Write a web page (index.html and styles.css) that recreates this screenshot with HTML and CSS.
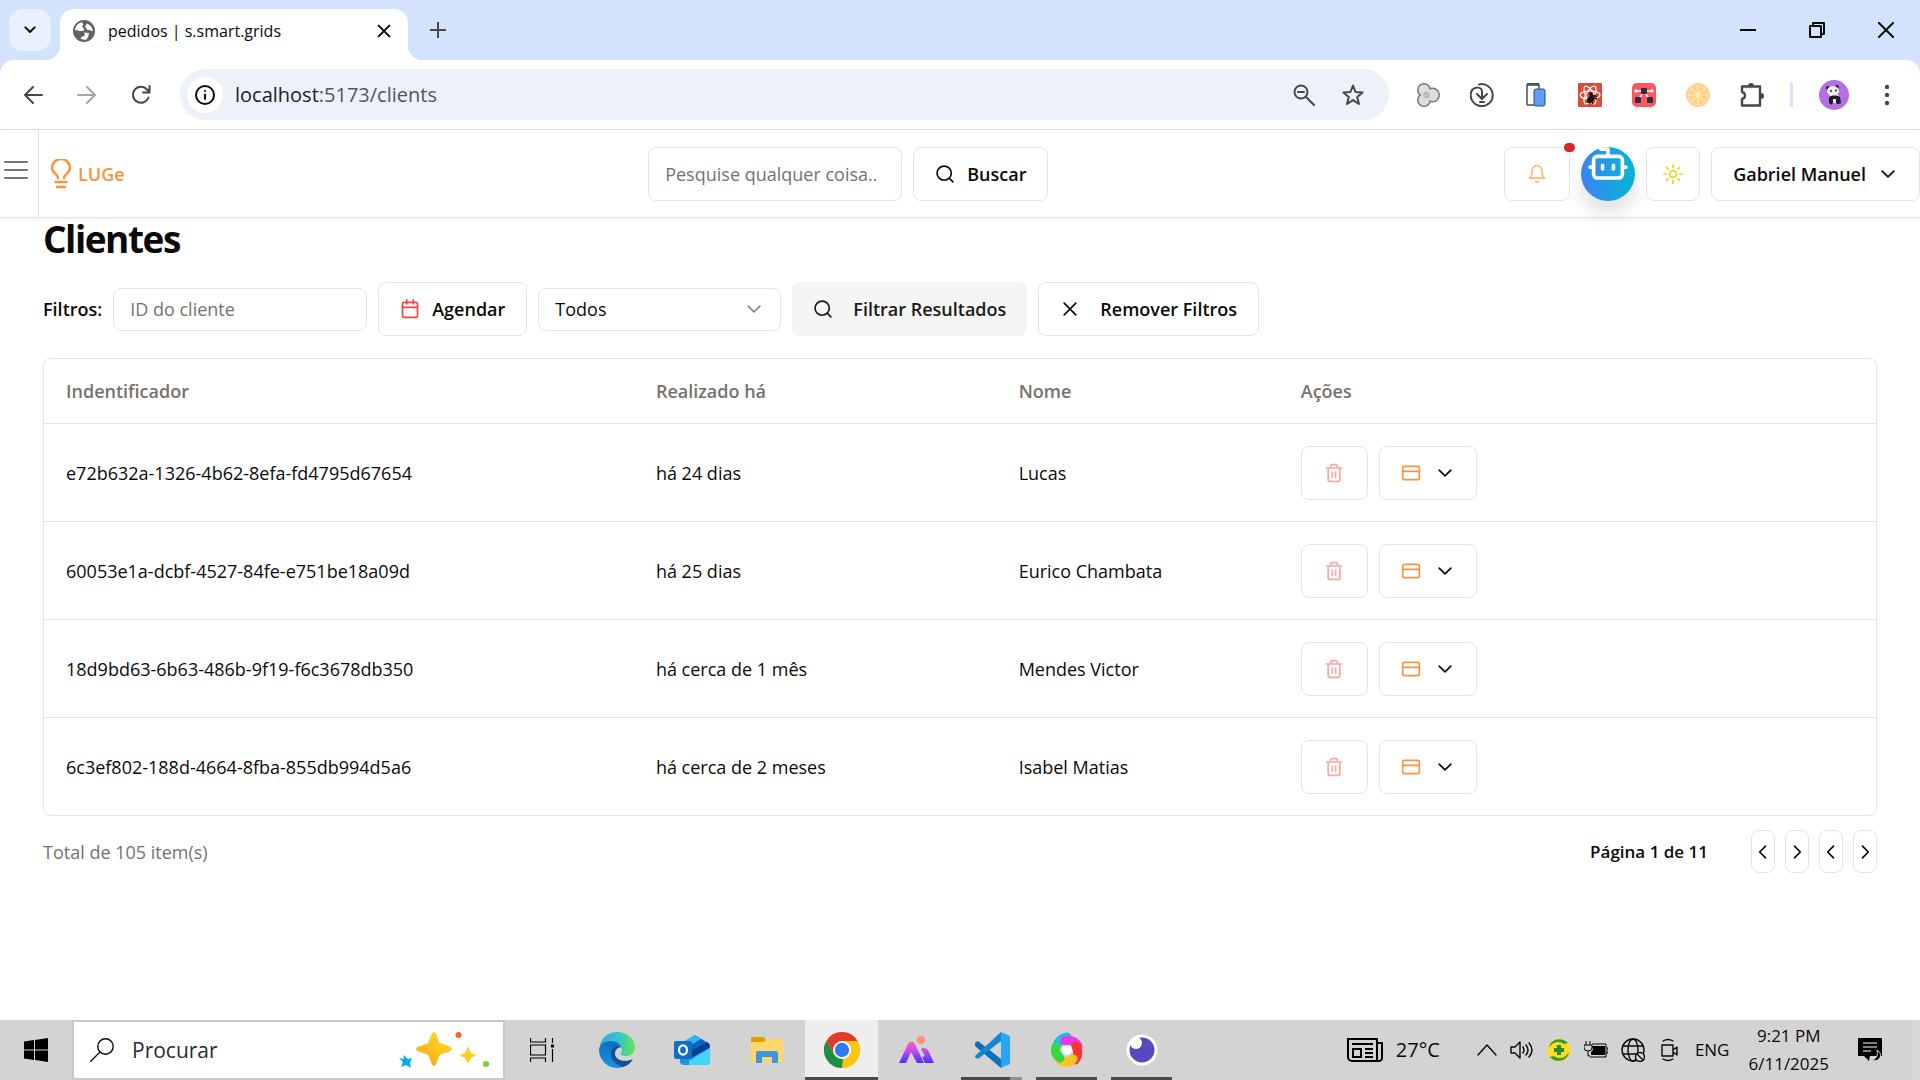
FILE: index.html
```
<!DOCTYPE html>
<html lang="pt">
<head>
<meta charset="utf-8">
<meta name="viewport" content="width=device-width, initial-scale=1">
<title>pedidos | s.smart.grids</title>
<link rel="stylesheet" href="styles.css">
</head>
<body>
<svg class="sprite" aria-hidden="true">
  <symbol id="search" viewBox="0 0 24 24"><circle cx="11" cy="11" r="8.5"/><path d="m21.5 21.5-4.5-4.5"/></symbol>
  <symbol id="down" viewBox="0 0 24 24"><path d="m5 8.500 7 7 7-7"/></symbol>
  <symbol id="left" viewBox="0 0 24 24"><path d="m15 5-7 7 7 7"/></symbol>
  <symbol id="right" viewBox="0 0 24 24"><path d="m9 5 7 7-7 7"/></symbol>
  <symbol id="trash" viewBox="0 0 24 24"><path d="M3 6h18M19 6v14a2 2 0 0 1-2 2H7a2 2 0 0 1-2-2V6M8 6V4a2 2 0 0 1 2-2h4a2 2 0 0 1 2 2v2M10 11v6M14 11v6"/></symbol>
  <symbol id="card" viewBox="0 0 24 24"><rect x="2" y="4" width="20" height="16" rx="2"/><path d="M2 10h20"/></symbol>
</svg>

<header class="browser">
  <div class="tabstrip">
    <button class="tab-search" aria-label="Pesquisar guias"><svg class="icon i16 bold" viewBox="0 0 24 24"><path d="m5 8 7 7 7-7"/></svg></button>
    <div class="tab">
      <svg class="i22" viewBox="0 0 22 22"><circle cx="11" cy="11" r="11" fill="#5f6368"/><path fill="#fff" d="M2 10.500C2 6 5 3 9 2.200c1 .3.500 1.600 1.400 2.200L9 6.200l1 1.600c1.200.9 1.800 2 .5 2.900L8 11H5.500L4 10zM14 3.500c2.800 1.200 5.500 3.800 5.700 7.200-1.200.8-1.800 0-2.700-.7h-2.500l-1.500-2-1-1.500 1-1.500zM11 12.500l5 .5-.5 3-1.800 3.300c-1.800 1-5 .4-6.200-.7L9 16.500c2 .5 2-1 3-1.500z"/></svg>
      <span class="tab-title">pedidos | s.smart.grids</span>
      <button class="plain" aria-label="Fechar guia"><svg class="icon i16 bold" viewBox="0 0 24 24"><path d="M4 4l16 16M20 4 4 20"/></svg></button>
    </div>
    <button class="plain new-tab" aria-label="Nova guia"><svg class="icon i16" viewBox="0 0 16 16"><path d="M8 0v16M0 8h16"/></svg></button>
    <div class="window-controls">
      <button class="plain" aria-label="Minimizar"><svg class="icon i16" viewBox="0 0 16 16"><path d="M0 8h16"/></svg></button>
      <button class="plain" aria-label="Restaurar"><svg class="icon i16" viewBox="0 0 16 16"><path d="M1 4h11v11H1zM4 4V1h11v11h-3"/></svg></button>
      <button class="plain" aria-label="Fechar"><svg class="icon i16" viewBox="0 0 16 16"><path d="m0 0 16 16M16 0 0 16"/></svg></button>
    </div>
  </div>
  <div class="toolbar">
    <nav class="history">
      <button class="plain" aria-label="Voltar"><svg class="icon i20 grey" viewBox="0 0 20 20"><path d="M19 10H2M10 2l-8 8 8 8"/></svg></button>
      <button class="plain" aria-label="Avançar"><svg class="icon i20 light" viewBox="0 0 20 20"><path d="M1 10h17M10 2l8 8-8 8"/></svg></button>
      <button class="plain" aria-label="Recarregar"><svg class="icon i20 grey" viewBox="0 0 20 20"><path d="M17.500 12.500A8 8 0 1 1 16 4.500l2 2M18.500 1v6.500H12"/></svg></button>
    </nav>
    <div class="omnibox">
      <span class="info"><svg class="icon i20" viewBox="0 0 20 20"><circle cx="10" cy="10" r="9"/><path d="M10 9.500v4.500M10 6h.01"/></svg></span>
      <a class="url" href="#clients"><b>localhost</b>:5173/clients</a>
      <button class="plain" aria-label="Zoom"><svg class="icon i22 grey" viewBox="0 0 22 22"><circle cx="8" cy="8" r="6.500"/><path d="m13 13 8 8M5 8h6"/></svg></button>
      <button class="plain" aria-label="Favoritar"><svg class="icon i24 grey" viewBox="0 0 24 24"><path d="m12 2.500 2.600 6.500 7 .5-5.400 4.500 1.800 7-6-3.900L6 21l1.800-7-5.400-4.500 7-.5z"/></svg></button>
    </div>
    <div class="extensions">
      <button class="plain" aria-label="Extensão de cores"><svg class="i24" viewBox="0 0 24 24"><g fill="#d9d9d9" stroke="#777" stroke-width="2"><circle cx="8" cy="7" r="6"/><circle cx="8" cy="17" r="6"/><circle cx="16.500" cy="12" r="6.500"/></g><g fill="#dedede"><circle cx="8" cy="7" r="5.500"/><circle cx="8" cy="17" r="5.500"/><circle cx="16.500" cy="12" r="6"/></g><circle cx="10.500" cy="12" r="3.500" fill="#bdbdbd"/></svg></button>
      <button class="plain" aria-label="Downloads"><svg class="icon i24 grey" viewBox="0 0 24 24"><path d="M9 1.500A11 11 0 1 1 2 7c3-3 10-4 10 2v6M7 11l5 5 5-5M10 19h4"/></svg></button>
      <button class="plain" aria-label="Dispositivos"><svg class="i24" viewBox="0 0 24 24"><path d="M3 22V2h12v4M3 22h7" fill="none" stroke="#42506b" stroke-width="1.500"/><path d="M3 1h12" stroke="#42506b" stroke-width="2"/><rect x="10" y="6" width="11" height="17" rx="2" fill="#5c9dff" stroke="#34486c"/></svg></button>
      <button class="plain" aria-label="React"><svg class="i24" viewBox="0 0 24 24"><rect width="24" height="24" rx="1" fill="#dc4b3c"/><g fill="none" stroke="#fff" stroke-width="1.200"><ellipse cx="12" cy="12" rx="10" ry="4"/><ellipse cx="12" cy="12" rx="10" ry="4" transform="rotate(60 12 12)"/><ellipse cx="12" cy="12" rx="10" ry="4" transform="rotate(120 12 12)"/></g><ellipse cx="13" cy="16" rx="3" ry="5" transform="rotate(40 13 16)" fill="#211"/><circle cx="13" cy="11" r="2" fill="#211"/><path d="m9 16 4 1 2 4m-1-7 5 2m-3-4 3 2" stroke="#211" stroke-width="1.500" fill="none"/></svg></button>
      <button class="plain" aria-label="Redux"><svg class="i24" viewBox="0 0 24 24"><rect width="24" height="24" rx="5" fill="#ff555d"/><path d="M3 8h18M10 11l-3 5M14 11l3 5" stroke="#fff" stroke-width="1.500"/><circle cx="4" cy="8" r="1.800" fill="#fff"/><circle cx="20" cy="8" r="1.800" fill="#fff"/><rect x="9" y="5" width="6" height="6" rx="1" fill="#2b2f45"/><rect x="3" y="14" width="6" height="6" rx="1" fill="#2b2f45"/><rect x="15" y="14" width="6" height="6" rx="1" fill="#2b2f45"/></svg></button>
      <button class="plain" aria-label="Laranja"><svg class="i24" viewBox="0 0 24 24"><circle cx="12" cy="12" r="11.500" fill="#ffd184" stroke="#ffc7a0"/><path d="M12 2v20M2 12h20M5 5l14 14M19 5 5 19" stroke="#ffe9bd" stroke-width="1.200"/><circle cx="12" cy="12" r="10" fill="none" stroke="#ffe9bd" stroke-width=".8"/></svg></button>
      <button class="plain" aria-label="Extensões"><svg class="i24" viewBox="0 0 24 24"><path d="M2 3.500h18v19H2v-6.500c4-1 4-6 0-7z" fill="none" stroke="#474747" stroke-width="2.400" stroke-linejoin="round"/><path d="M8 3a3 3 0 0 1 6 0zM21 10a3 3 0 0 1 0 6z" fill="#474747"/></svg></button>
      <span class="divider"></span>
      <button class="plain" aria-label="Perfil"><svg class="i30" viewBox="0 0 30 30"><circle cx="15" cy="15" r="15" fill="#b66de8"/><circle cx="9" cy="8" r="2" fill="#222"/><circle cx="18" cy="7" r="2" fill="#222"/><ellipse cx="15" cy="18" rx="5" ry="5" fill="#eee"/><ellipse cx="14" cy="11" rx="6" ry="5" fill="#eee"/><circle cx="12" cy="11" r="1" fill="#222"/><circle cx="17" cy="10.500" r="1" fill="#222"/><path d="M10 17c3-2 8-2 11 0l1 6c-2 2-5 1-5-1v-3h-3v3c0 3-3 3-4 1z" fill="#1d1d1f"/></svg></button>
      <button class="plain" aria-label="Menu"><svg class="i24" viewBox="0 0 24 24" fill="#474747"><circle cx="12" cy="4" r="2.200"/><circle cx="12" cy="12" r="2.200"/><circle cx="12" cy="20" r="2.200"/></svg></button>
    </div>
  </div>
</header>

<header class="app-bar">
  <div class="menu-cell"><button class="plain" aria-label="Abrir menu"><svg class="i24 icon stone" viewBox="0 0 24 24"><path d="M1 4h22M1 12h22M1 20h22"/></svg></button></div>
  <a class="brand" href="#home"><svg class="bulb" viewBox="0 0 20 30"><path d="M7 19c0-4-6-5-6-10a9 9 0 0 1 18 0c0 5-6 6-6 10M4.500 23h11M6 28h8"/></svg>LUGe</a>
  <form class="search">
    <input class="field tall" type="text" aria-label="Pesquisar" placeholder="Pesquise qualquer coisa..">
    <button class="btn" type="button"><svg class="icon i20"><use href="#search"/></svg>Buscar</button>
  </form>
  <div class="actions">
    <button class="btn bell" aria-label="Notificações"><svg class="icon i20" viewBox="0 0 24 24"><path d="M6 8a6 6 0 0 1 12 0c0 7 3 9 3 9H3s3-2 3-9M10.300 21a2 2 0 0 0 3.400 0"/></svg><span class="badge"></span></button>
    <button class="bot" aria-label="Assistente"><svg viewBox="-3 2.800 30 30"><path d="M12 8V4H8"/><rect width="16" height="12" x="4" y="8" rx="2"/><path d="M2 14h2M20 14h2M15 13v2M9 13v2"/></svg></button>
    <button class="btn sun" aria-label="Tema"><svg class="icon i20" viewBox="0 0 24 24"><circle cx="12" cy="12" r="4"/><path d="M12 1v3M12 20v3M4.200 4.200l2 2M17.800 17.800l2 2M1 12h3M20 12h3M6.200 17.800l-2 2M19.800 4.200l-2 2"/></svg></button>
    <button class="btn user">Gabriel Manuel<svg class="icon i20"><use href="#down"/></svg></button>
  </div>
</header>

<main class="content">
  <h1>Clientes</h1>
  <form class="filters">
    <label for="client-id">Filtros:</label>
    <input class="field" id="client-id" type="text" placeholder="ID do cliente">
    <button class="btn date" type="button"><svg class="icon i20" viewBox="0 0 24 24"><rect x="3" y="4" width="18" height="18" rx="2"/><path d="M8 1v5M16 1v5M3 10h18"/></svg>Agendar</button>
    <div class="select-wrap">
      <select class="field" aria-label="Estado"><option>Todos</option></select>
      <svg class="icon i20"><use href="#down"/></svg>
    </div>
    <button class="btn wide filled" type="button"><svg class="icon i20"><use href="#search"/></svg>Filtrar Resultados</button>
    <button class="btn wide" type="button"><svg class="icon i20" viewBox="0 0 24 24"><path d="m5 5 14 14M19 5 5 19"/></svg>Remover Filtros</button>
  </form>

  <div class="table-card">
    <table>
      <thead><tr><th class="c-id">Indentificador</th><th class="c-date">Realizado há</th><th class="c-name">Nome</th><th>Ações</th></tr></thead>
      <tbody>
        <tr><td>e72b632a-1326-4b62-8efa-fd4795d67654</td><td>há 24 dias</td><td>Lucas</td><td><div class="row-actions"><button class="btn trash" aria-label="Apagar"><svg class="icon i20"><use href="#trash"/></svg></button><button class="btn card" aria-label="Cartão"><svg class="icon i20"><use href="#card"/></svg><svg class="icon i20 dark"><use href="#down"/></svg></button></div></td></tr>
        <tr><td>60053e1a-dcbf-4527-84fe-e751be18a09d</td><td>há 25 dias</td><td>Eurico Chambata</td><td><div class="row-actions"><button class="btn trash" aria-label="Apagar"><svg class="icon i20"><use href="#trash"/></svg></button><button class="btn card" aria-label="Cartão"><svg class="icon i20"><use href="#card"/></svg><svg class="icon i20 dark"><use href="#down"/></svg></button></div></td></tr>
        <tr><td>18d9bd63-6b63-486b-9f19-f6c3678db350</td><td>há cerca de 1 mês</td><td>Mendes Victor</td><td><div class="row-actions"><button class="btn trash" aria-label="Apagar"><svg class="icon i20"><use href="#trash"/></svg></button><button class="btn card" aria-label="Cartão"><svg class="icon i20"><use href="#card"/></svg><svg class="icon i20 dark"><use href="#down"/></svg></button></div></td></tr>
        <tr><td>6c3ef802-188d-4664-8fba-855db994d5a6</td><td>há cerca de 2 meses</td><td>Isabel Matias</td><td><div class="row-actions"><button class="btn trash" aria-label="Apagar"><svg class="icon i20"><use href="#trash"/></svg></button><button class="btn card" aria-label="Cartão"><svg class="icon i20"><use href="#card"/></svg><svg class="icon i20 dark"><use href="#down"/></svg></button></div></td></tr>
      </tbody>
    </table>
  </div>

  <div class="pager">
    <span class="total">Total de 105 item(s)</span>
    <span class="page">Página 1 de 11</span>
    <div class="pager-buttons">
      <button class="btn step" aria-label="Primeira"><svg class="icon i20"><use href="#left"/></svg></button>
      <button class="btn step" aria-label="Anterior"><svg class="icon i20"><use href="#right"/></svg></button>
      <button class="btn step" aria-label="Próxima"><svg class="icon i20"><use href="#left"/></svg></button>
      <button class="btn step" aria-label="Última"><svg class="icon i20"><use href="#right"/></svg></button>
    </div>
  </div>
</main>

<footer class="taskbar">
  <button class="plain start" aria-label="Iniciar"><svg class="i24" viewBox="0 0 24 24"><path d="M0 3.500 10 2v9.500H0zM11 1.900 24 0v11.500H11zM0 12.500h10V22L0 20.500zM11 12.500h13V24l-13-1.900z"/></svg></button>
  <label class="task-search">
    <svg class="icon i24 thin" viewBox="0 0 24 24"><circle cx="15.500" cy="8.500" r="7.700"/><path d="M10 14 .5 23.500"/></svg>
    <input type="text" aria-label="Procurar" placeholder="Procurar">
    <svg class="sparkles" viewBox="0 0 92 38"><defs><linearGradient id="gold" x1="1" y1="0" x2="0" y2="1"><stop offset="0" stop-color="#ffdb3b"/><stop offset=".5" stop-color="#ffc91f"/><stop offset="1" stop-color="#f2a51d"/></linearGradient></defs><path fill="url(#gold)" d="M35 1c3 0 4 10 6 11s12 3 12 6-10 4-12 6-3 11-6 11-4-9-6-11-12-3-12-6 10-4 12-6 3-11 6-11zM69 16c1 0 2 5 3 6s5 1 5 2-4 2-5 3-2 5-3 5-2-4-3-5-5-2-5-3 4-1 5-2 2-6 3-6z"/><path fill="#00adef" d="m4 24 5 4 4-1-2 5 1 5-5-3-5 2 2-5-4-4 5 1z"/><circle cx="59.500" cy="4" r="3" fill="#f7632c"/><circle cx="87" cy="33" r="3" fill="#8bc83f"/></svg>
  </label>
  <nav class="apps">
    <button class="app" aria-label="Visão de tarefas"><svg class="i24" viewBox="0 0 24 24" fill="none" stroke="#000" stroke-width="1.200"><path d="M.5 0v4h15V0M.5 7h15v10H.5zM.5 24v-4h15v4M22.500 0v5M22.500 11v13"/><path d="M21 6.500h3v3h-3z" fill="#000" stroke="none"/></svg></button>
    <button class="app" aria-label="Edge"><svg class="i36" viewBox="0 0 36 36"><defs><linearGradient id="edgetop"><stop offset="0" stop-color="#35a8ea"/><stop offset=".55" stop-color="#35c5c9"/><stop offset="1" stop-color="#67e54b"/></linearGradient><linearGradient id="edgeleft" x2="0" y2="1"><stop offset="0" stop-color="#0f6db9"/><stop offset="1" stop-color="#1593e8"/></linearGradient></defs><path fill="url(#edgetop)" d="M1 14C2 6 9 0 18 0c10 0 18 7 18 15 0 6-4 9-9 9-4 0-6-1-5-3 3-6-3-11-9-11-5 0-9 1-12 4z"/><path fill="url(#edgeleft)" d="M0 18C0 12 6 9 12 9c6 0 10 4 10 6-6-2-10 2-9 8 1 7 7 10 11 12C11 39 0 29 0 18z"/><path fill="#154f95" d="M13 17c-4 9 4 16 11 18 4-1 8-4 10-8-5 3-17 3-18-5 0-4 2-6 6-7-4-2-7-1-9 2z"/></svg></button>
    <button class="app" aria-label="Outlook"><svg class="i36" viewBox="0 0 36 36"><path fill="#1c93dc" d="M6 12 21 3l15 9v17a4 4 0 0 1-4 4H10a4 4 0 0 1-4-4z"/><path fill="#30b5ef" d="m6 12 15-9 6 4-18 11z"/><path fill="#0766c4" d="M17 13 27 7l6 4-17 12z"/><path fill="#0a3d91" d="M17 19 33 10c3 2 3 5 2 6L17 26z"/><path fill="#45d5fb" d="m15 29 21-13v13a4 4 0 0 1-4 4H15z"/><rect y="9" width="18" height="18" rx="2" fill="#0f6fc8"/><ellipse cx="9" cy="18" rx="4" ry="4.600" fill="none" stroke="#fff" stroke-width="2.200"/></svg></button>
    <button class="app" aria-label="Explorador"><svg class="i36" viewBox="0 0 36 36"><path fill="#e2a100" d="M2 6a1 1 0 0 1 1-1h12l2 3-2 4H2z"/><path fill="#ffd66a" d="M2 10h13l3-3h15a1 1 0 0 1 1 1v22H2z"/><path fill="#3b97df" d="M7 31V21a2 2 0 0 1 2-2h18a2 2 0 0 1 2 2v10h-6v-6H13v6z"/></svg></button>
    <button class="app active running" aria-label="Chrome"><svg class="i36" viewBox="0 0 36 36"><circle cx="18" cy="18" r="18" fill="#fdc411"/><path fill="#e33b2e" d="M2.400 9A18 18 0 0 1 33.600 9H18l-8 13z"/><path fill="#1e8e3e" d="M2.400 9 10.200 22.500 18 27l1 0-1 9A18 18 0 0 1 2.400 9z"/><path fill="#fdc411" d="M33.600 9A18 18 0 0 1 18 36l8-13.500V9z"/><circle cx="18" cy="18" r="9" fill="#fff"/><circle cx="18" cy="18" r="7.200" fill="#2f7bf0"/></svg></button>
    <button class="app" aria-label="Editor IA"><svg class="i36" viewBox="0 0 36 36"><defs><linearGradient id="ai" x2="0" y2="1"><stop offset="0" stop-color="#ff5bb0"/><stop offset=".45" stop-color="#c04bef"/><stop offset="1" stop-color="#4234f4"/></linearGradient></defs><path fill="url(#ai)" d="m0 31 9-19c2-3 5-3 7 0l9 19h-7l-6-11-5 11zM22 17c3-2 6-1 8 3l5 11h-9l-3-6 3-1z"/><circle cx="22" cy="8" r="4" fill="#ff8f75"/></svg></button>
    <button class="app running split" aria-label="VS Code"><svg class="i36" viewBox="0 0 36 36"><path fill="#0871b8" d="M1 11 4 9l23 18v9L1 14z"/><path fill="#1188cf" d="M1 24 27 0v9L4 27l-3-2z"/><path fill="#29a5f5" d="M27 0l9 4v28l-9 4z"/></svg></button>
    <button class="app running" aria-label="Espiral"><svg class="i36" viewBox="0 0 36 36"><g fill="none" stroke-width="9" stroke-linecap="round"><path stroke="#2ab7f2" d="M8 13q3-7 10-8"/><path stroke="#ee35df" d="M16 9q9-2 13 5"/><path stroke="#f33" d="M27 14q4 8-1 14"/><path stroke="#ffc21e" d="M24 27q-6 6-13 1"/><path stroke="#35d83f" d="M11 26q-6-4-4-11"/></g><circle cx="18" cy="18" r="5" fill="#fff"/></svg></button>
    <button class="app running" aria-label="Insomnia"><svg class="i36" viewBox="0 0 36 36"><circle cx="18" cy="18" r="15.500" fill="#fff"/><circle cx="18" cy="18" r="12.500" fill="#5849be"/><circle cx="12" cy="11" r="6" fill="#fff"/></svg></button>
  </nav>
  <div class="tray">
    <svg class="i36" viewBox="0 0 36 26" fill="none" stroke="#000" stroke-width="2"><path d="M5 2h25v22H5a4 4 0 0 1-4-4V2h4M30 6h5v15q0 3-4 3M5 7h21M18 12h8M18 16h8M18 20h8M6 12h8v8H6z"/></svg>
    <span class="temp">27°C</span>
    <svg class="icon i20 thin" viewBox="0 0 20 20"><path d="m1 15 9-10 9 10"/></svg>
    <svg class="icon i24 thin" viewBox="0 0 24 24"><path d="M1 9h4l5-5v16l-5-5H1zM13 9q2 3 0 6M16 7q4 5 0 10M19 5q6 7 0 14"/></svg>
    <svg class="i24" viewBox="0 0 24 24"><circle cx="12" cy="12" r="11.500" fill="#ffdc20"/><path d="M2 10C3 1 15-2 21 5l-4 1C12 2 5 4 2 10zM22 14C21 23 9 26 3 19l4-1c5 4 12 2 15-4z" fill="#2c9b3a"/><path d="M10 7h4v3h3v4h-3v3h-4v-3H7v-4h3z" fill="#218c32"/></svg>
    <svg class="i24" viewBox="0 0 24 24"><path d="M2 3v4m4-4v4M0 7h8v3q0 3-4 3t-4-3zM4 13v5h2M8 6h14v13H6M22 10h2v5h-2" fill="none" stroke="#000"/><path d="M8 8h13v9H7v-3l2-2z"/></svg>
    <svg class="icon i24 thin" viewBox="0 0 24 24"><circle cx="12" cy="12" r="11"/><ellipse cx="12" cy="12" rx="5" ry="11"/><path d="M2 8h20M2 16h20"/><circle cx="19" cy="19" r="4.500" fill="#d3d3d3"/><path d="m16 16 6 6"/></svg>
    <svg class="icon i24 thin" viewBox="0 0 24 24"><path d="M5 3q5-3 10 0M5 21q5 3 10 0M4 7h11v11H4zM15 12l4-3v8l-4-3"/></svg>
    <span class="lang">ENG</span>
    <div class="clock"><span>9:21 PM</span><span>6/11/2025</span></div>
    <svg class="i24 note" viewBox="0 0 24 24"><path d="M0 0h24v18H12l-1 5-5-5H0z"/><path d="M5 5h14M5 9h14M5 13h8" stroke="#fff"/><path d="M19 12q5 3 3 8-3 4-8 2 7-2 5-10z" fill="#000" stroke="#d3d3d3"/></svg>
  </div>
</footer>
</body>
</html>
```
FILE: styles.css
```
:root {
  --line: #e5e5e5;
  --muted: #78716c;
  --ink: #0c0a09;
}
* { box-sizing: border-box; }
body {
  margin: 0;
  min-height: 100vh;
  display: flex;
  flex-direction: column;
  font: 18px/28px "Open Sans", "Noto Sans", sans-serif;
  color: var(--ink);
  background: #fff;
}
button, input, select { font: inherit; color: inherit; }
button { cursor: pointer; }
a { text-decoration: none; }
svg { flex: none; display: block; }
.sprite { display: none; }

.icon { fill: none; stroke: currentColor; stroke-width: 2; stroke-linecap: round; stroke-linejoin: round; }
.i16 { width: 16px; height: 16px; }
.i20 { width: 20px; height: 20px; }
.i22 { width: 22px; height: 22px; }
.i24 { width: 24px; height: 24px; }
.i30 { width: 30px; height: 30px; }
.i36 { width: 36px; height: 36px; }
.bold { stroke-width: 3; }
.thin { stroke-width: 1.4; }
.grey { color: #474747; }
.light { color: #a5a5a5; }
.stone { color: var(--muted); }
.dark { color: var(--ink); }
.plain { display: flex; align-items: center; justify-content: center; padding: 0; border: 0; background: none; }

/* browser window */
.browser { background: #d3e3fd; }
.tabstrip { display: flex; height: 60px; padding: 9px 26px 0 9px; }
.tab-search {
  display: flex; align-items: center; justify-content: center;
  width: 42px; height: 42px; padding: 0; border: 0; border-radius: 14px; background: #e9f0fe;
}
.tab {
  position: relative;
  display: flex; align-items: center; gap: 13px;
  width: 348px; margin-left: 9px; padding: 0 16px 8px 13px;
  border-radius: 14px 14px 0 0; background: #fff;
}
.tab::before, .tab::after { content: ""; position: absolute; bottom: 0; width: 14px; height: 14px; }
.tab::before { right: 100%; background: radial-gradient(circle at 0 0, transparent 14px, #fff 14px); }
.tab::after { left: 100%; background: radial-gradient(circle at 100% 0, transparent 14px, #fff 14px); }
.tab-title { flex: 1; font-size: 16px; }
.new-tab { align-self: flex-start; height: 42px; margin-left: 22px; color: #474747; }
.window-controls { display: flex; gap: 53px; height: 42px; margin-left: auto; }
.toolbar {
  display: flex; align-items: center; height: 70px; padding: 0 21px 0 23px;
  border-bottom: 1px solid #dfe1e3; border-radius: 14px 14px 0 0; background: #fff;
}
.history { display: flex; gap: 34px; }
.omnibox {
  flex: 1; display: flex; align-items: center; gap: 26px;
  height: 51px; margin-left: 29px; padding: 0 24px 0 7px; border-radius: 26px; background: #ecf1fa;
}
.info { display: flex; align-items: center; justify-content: center; width: 36px; height: 36px; border-radius: 50%; background: #fff; }
.url { flex: 1; margin-left: -14px; font-size: 20px; color: #555; }
.url b { font-weight: 400; color: #202124; }
.extensions { display: flex; align-items: center; gap: 30px; margin-left: 27px; }
.divider { width: 3px; height: 24px; margin: 0 -4px; background: #d3e3fd; }
.extensions > :last-child { margin-left: -4px; }

/* application bar */
.app-bar {
  display: grid; grid-template-columns: 39px 31% auto 1fr; align-items: center;
  height: 88px; border-bottom: 1px solid var(--line); box-shadow: 0 1px 4px rgba(0, 0, 0, .08);
}
.menu-cell { display: flex; align-items: center; align-self: stretch; padding: 0 4px 8px; border-right: 1px solid var(--line); }
.brand { display: flex; align-items: center; gap: 7px; padding-left: 12px; font-weight: 600; color: #fb923c; }
.bulb { width: 20px; height: 30px; fill: none; stroke: currentColor; stroke-width: 2.4; stroke-linecap: round; }
.search, .actions, .row-actions { display: flex; gap: 11px; }
.search { padding-left: 14px; }
.actions { justify-content: flex-end; }

.field {
  width: 254px; height: 43px; padding: 0 16px;
  border: 1px solid var(--line); border-radius: 8px; background: #fff;
}
.field::placeholder { color: var(--muted); opacity: 1; }
.field.tall { height: 54px; }
.btn {
  display: flex; align-items: center; justify-content: center; gap: 12px;
  height: 54px; padding: 0 21px; border: 1px solid var(--line); border-radius: 8px;
  background: #fff; font-weight: 600; white-space: nowrap;
}
.btn.bell { position: relative; width: 66px; color: #fdba74; }
.badge { position: absolute; top: -5px; right: -6px; width: 11px; height: 9px; border-radius: 5px; background: #dc2626; }
.bot {
  width: 54px; height: 54px; padding: 0; border: 0; border-radius: 50%;
  background: linear-gradient(90deg, #3b82f6, #06b6d4); box-shadow: 0 12px 18px rgba(0, 0, 0, .12);
}
.bot svg { width: 54px; height: 54px; fill: none; stroke: #fff; stroke-width: 2; stroke-linecap: round; stroke-linejoin: round; }
.btn.sun { width: 54px; padding: 0; color: #facc15; }

/* clients page */
.content { flex: 1; padding: 0 43px; }
h1 { margin: 0 0 22px; font-size: 37px; line-height: 42px; font-weight: 700; letter-spacing: -0.04em; }
.filters { display: flex; align-items: center; gap: 11px; margin-bottom: 22px; }
.filters label { font-weight: 600; }
.btn.date svg { color: #ef4444; }
.select-wrap { display: grid; align-items: center; }
.select-wrap > * { grid-area: 1 / 1; }
.select-wrap .field { width: 243px; appearance: none; }
.select-wrap .icon { justify-self: end; margin-right: 17px; color: #8b8683; pointer-events: none; }
.btn.wide { gap: 20px; }
.btn.filled { padding: 0 20px; border-color: #f5f5f4; background: #f5f5f4; color: #1c1917; }

.table-card { border: 1px solid var(--line); border-radius: 8px; }
table { width: 100%; table-layout: fixed; border-collapse: separate; border-spacing: 0; }
.c-id { width: 32.2%; }
.c-date { width: 19.8%; }
.c-name { width: 15.4%; }
th { padding: 18px 22px; text-align: left; font-weight: 600; color: var(--muted); }
td { padding: 22px 22px 21px; border-top: 1px solid var(--line); }
.trash { width: 67px; color: #fca5a5; }
.card { gap: 14px; color: #fb923c; }

.pager { display: flex; align-items: center; margin-top: 14px; }
.total { color: var(--muted); }
.page { margin-left: auto; font-weight: 600; font-size: 17px; }
.pager-buttons { display: flex; gap: 10px; margin-left: 43px; }
.btn.step { width: 24px; height: 43px; padding: 0; }

/* desktop taskbar */
.taskbar { position: sticky; bottom: 0; display: flex; height: 60px; background: #d3d3d3; }
.start { width: 72px; }
.task-search {
  display: flex; align-items: center; gap: 18px; width: 433px; padding: 0 12px 0 16px;
  border: 2px solid #c8c8c8; background: #fff;
}
.task-search input { flex: 1; min-width: 0; padding: 0; border: 0; font-size: 21px; }
.task-search input::placeholder { color: #2b2b2b; opacity: 1; }
.sparkles { width: 92px; height: 38px; }
.apps { display: flex; gap: 2px; }
.app {
  display: flex; align-items: center; justify-content: center;
  width: 73px; height: 60px; padding: 0; border: 0; background: none;
}
.app.running { background: linear-gradient(#4a4a4a, #4a4a4a) bottom / 61px 3px no-repeat; }
.app.running.split { background: linear-gradient(90deg, #4a4a4a 49px, #929292 49px) bottom / 61px 3px no-repeat; }
.app.running.active { border-bottom: 3px solid #4a4a4a; padding-top: 3px; background: #eee; }
.tray { display: flex; align-items: center; gap: 13px; margin-left: auto; padding-right: 30px; border-right: 8px solid #d8d8d8; font-size: 17px; }
.temp { margin-right: 24px; font-size: 20px; }
.clock { display: flex; flex-direction: column; align-items: center; margin: 0 16px 0 6px; }
```
